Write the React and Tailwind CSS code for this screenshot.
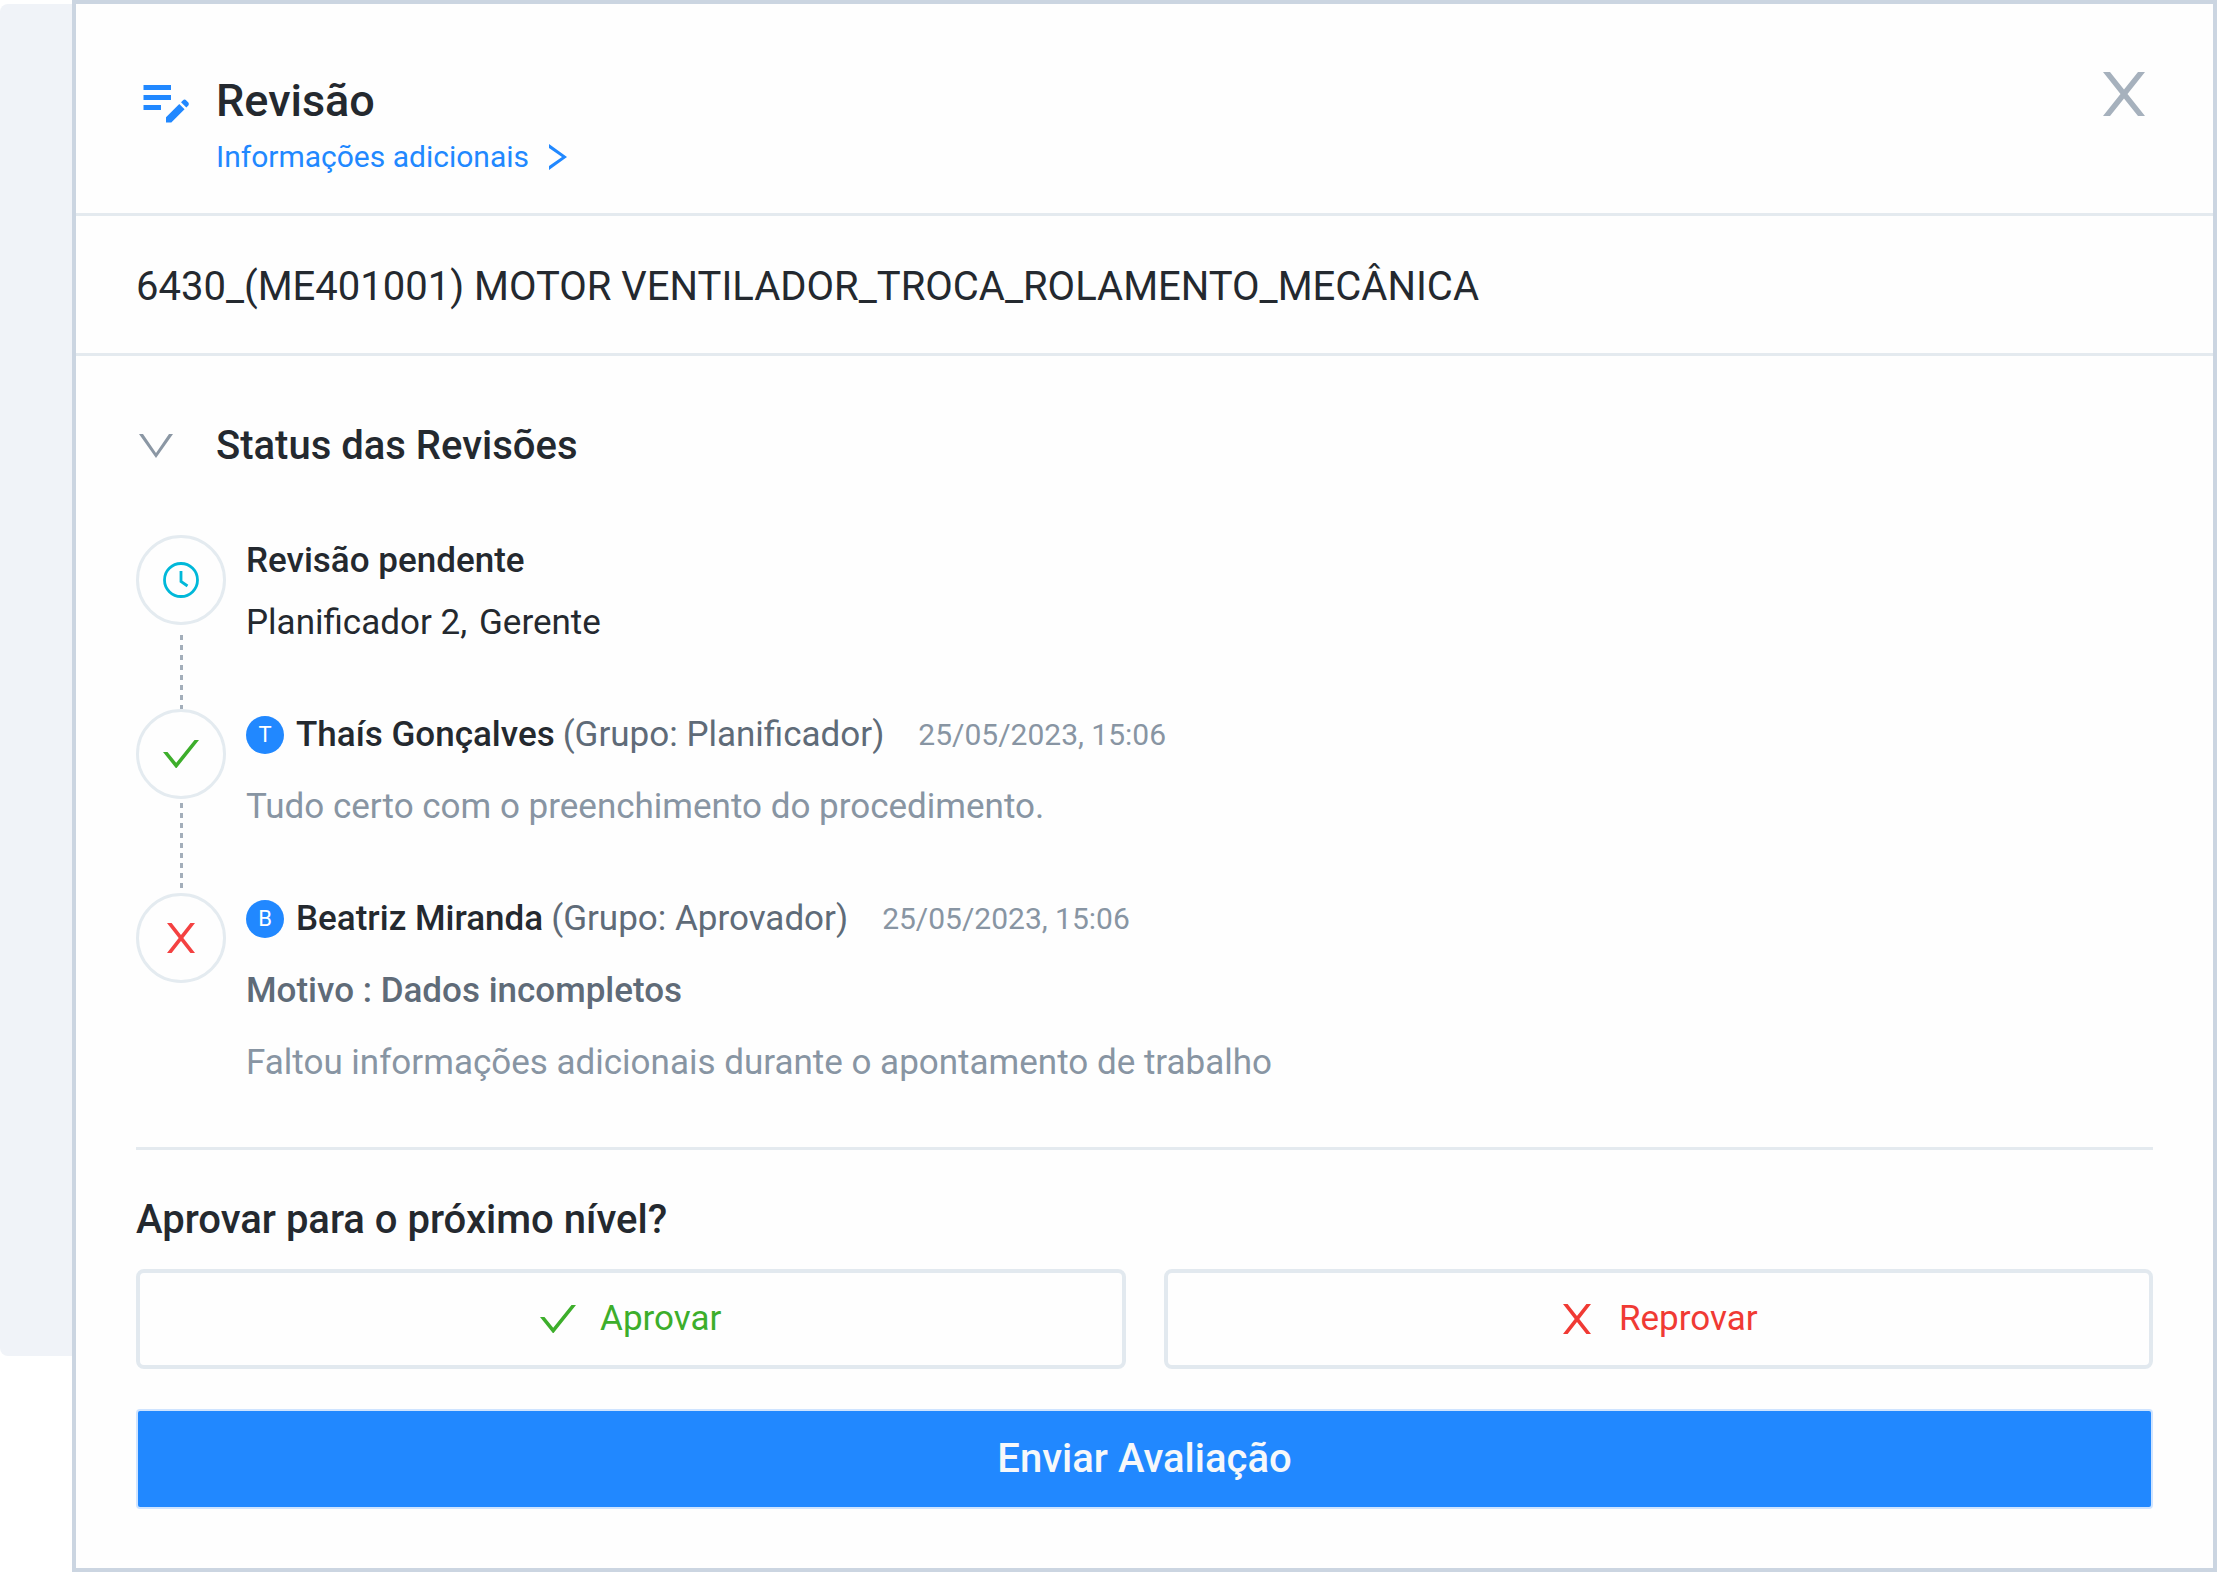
import React, { useState } from 'react';
import { MdEditNote } from 'react-icons/md';

const REVIEWS = [
  {
    id: 1, status: 'approved', initial: 'T', name: 'Thaís Gonçalves', group: '(Grupo: Planificador)',
    date: '25/05/2023, 15:06', comment: 'Tudo certo com o preenchimento do procedimento.',
  },
  {
    id: 2, status: 'rejected', initial: 'B', name: 'Beatriz Miranda', group: '(Grupo: Aprovador)',
    date: '25/05/2023, 15:06', reason: 'Motivo : Dados incompletos',
    comment: 'Faltou informações adicionais durante o apontamento de trabalho',
  },
];

/* Icons */
function CheckIcon({ className }) {
  return (
    <svg viewBox="0 0 36 28" fill="currentColor" className={className} aria-hidden="true">
      <path d="M0 12h4.500l8.700 10.700L31.500 0H36L13.200 28.500z" />
    </svg>
  );
}

function CrossIcon({ className }) {
  return (
    <svg viewBox="0 0 42 44" fill="currentColor" className={className} aria-hidden="true">
      <path d="M0 0h7l14 17.500L35 0h7L24.500 22 42 44h-7L21 26.500 7 44H0l17.500-22z" />
    </svg>
  );
}

function ThinCrossIcon({ className }) {
  return (
    <svg viewBox="0 0 28 30" fill="currentColor" className={className} aria-hidden="true">
      <path d="M0 0h4.600L14 12 23.400 0H28L16.300 15 28 30h-4.600L14 18 4.600 30H0l11.700-15z" />
    </svg>
  );
}

function ClockIcon({ className }) {
  return (
    <svg viewBox="0 0 36 36" fill="none" stroke="currentColor" strokeWidth="2.800" className={className} aria-hidden="true">
      <circle cx="18" cy="18" r="16.500" />
      <path d="M18 9v10.500l6.500 4.500" />
    </svg>
  );
}

function StepMark({ children }) {
  return (
    <div className="flex size-[90px] shrink-0 items-center justify-center rounded-full border-[3px] border-[#e4ebf0]">
      {children}
    </div>
  );
}

function Connector({ className }) {
  return (
    <div className={`w-[3px] flex-1 bg-[repeating-linear-gradient(to_bottom,#a3aeba_0_5px,transparent_5px_10px)] ${className}`} />
  );
}

function Review({ review, last }) {
  return (
    <li className="flex gap-5">
      <div className="flex flex-col items-center">
        <StepMark>
          {review.status === 'approved'
            ? <CheckIcon className="h-7 w-9 text-[#3dae2b]" />
            : <ThinCrossIcon className="h-[30px] w-9 text-[#f44141]" />}
        </StepMark>
        {!last && <Connector className="mt-1" />}
      </div>
      <div className={last ? 'pt-0.5' : 'pt-0.5 pb-[62px]'}>
        <div className="flex h-12 items-center">
          <span className="mr-3 flex size-[38px] items-center justify-center rounded-full bg-[#2188ff] text-[22px] text-white">{review.initial}</span>
          <span className="font-medium">{review.name}</span>
          <span className="ml-2 text-[#5f6b78]">{review.group}</span>
          <time className="ml-[34px] text-[30px] text-[#8895a3]">{review.date}</time>
        </div>
        {review.reason && <p className="mt-6 h-12 font-medium text-[#5f6b78]">{review.reason}</p>}
        <p className="mt-6 h-12 text-[#8895a3]">{review.comment}</p>
      </div>
    </li>
  );
}

export default function App() {
  const [open, setOpen] = useState(true);

  return (
    <div className="flex min-h-screen items-start bg-white pr-px font-[Roboto,sans-serif] text-[#24292f]">
      <div className="mt-1 h-[1352px] w-[72px] shrink-0 rounded-l-[8px] bg-[#f0f3f8]" />

      <main className="min-w-0 flex-1 border-4 border-[#cbd5e1] bg-[#fefefe]">
        {/* Header */}
        <header className="flex items-start border-b-[3px] border-[#e4eaef] px-[60px] pt-[66px] pb-[35px]">
          <MdEditNote className="size-[60px] shrink-0 text-[#2188ff]" />
          <div className="ml-5 flex-1">
            <h1 className="text-[45px] leading-[62px] font-medium">Revisão</h1>
            <a href="#info" className="mt-1 flex items-center gap-5 text-[30px] leading-[42px] text-[#2188ff]">
              Informações adicionais
              <svg viewBox="0 0 18 26" fill="currentColor" className="h-[26px] w-[18px]" aria-hidden="true">
                <path d="M0 0l18 13L0 26v-4L13 13 0 4z" />
              </svg>
            </a>
          </div>
          <button type="button" aria-label="Fechar" className="mt-0.5 mr-2">
            <CrossIcon className="h-11 w-[42px] text-[#a6b1bd]" />
          </button>
        </header>

        <h2 className="border-b-[3px] border-[#e4eaef] px-[60px] pt-[42px] pb-[38px] text-[40px] leading-[57px]">
          6430_(ME401001) MOTOR VENTILADOR_TROCA_ROLAMENTO_MECÂNICA
        </h2>

        <div className="px-[60px] pt-[60px] pb-[59px]">
          <button type="button" aria-expanded={open} onClick={() => setOpen(!open)} className="flex items-center text-[40px] leading-[60px] font-medium">
            <svg viewBox="0 0 34 24" fill="currentColor" className="mr-[43px] ml-[3px] h-6 w-[34px] text-[#8b97a4]" aria-hidden="true">
              <path d="M0 0h4l13 19L30 0h4L17 24z" />
            </svg>
            Status das Revisões
          </button>

          {open && (
            <ol className="mt-[59px] text-[35px] leading-[48px]">
              <li className="flex gap-5">
                <div className="flex flex-col items-center">
                  <StepMark><ClockIcon className="size-9 text-[#00b8d9]" /></StepMark>
                  <Connector className="mt-[10px]" />
                </div>
                <div className="pt-0.5 pb-[62px]">
                  <p className="font-medium">Revisão pendente</p>
                  <p className="mt-[14px] flex gap-3"><span>Planificador 2,</span><span>Gerente</span></p>
                </div>
              </li>
              {REVIEWS.map((r, i) => <Review key={r.id} review={r} last={i === REVIEWS.length - 1} />)}
            </ol>
          )}

          {/* Decision */}
          <section className="mt-[60px] border-t-[3px] border-[#e4eaef] pt-10">
            <h3 className="text-[40px] leading-[60px] font-medium">Aprovar para o próximo nível?</h3>
            <div className="mt-[19px] grid grid-cols-2 gap-[38px] text-[35px]">
              <button type="button" className="flex h-[100px] items-center justify-center gap-6 rounded-[8px] border-4 border-[#e2e9ef] text-[#3dae2b]">
                <CheckIcon className="h-7 w-9" />
                Aprovar
              </button>
              <button type="button" className="flex h-[100px] items-center justify-center gap-6 rounded-[8px] border-4 border-[#e2e9ef] text-[#f03a34]">
                <ThinCrossIcon className="h-[30px] w-9" />
                Reprovar
              </button>
            </div>
            <button type="button" className="mt-10 h-[100px] w-full rounded-[4px] border-2 border-[#cfe4ff] bg-[#2188ff] text-[40px] font-medium text-[#f6f8fa]">
              Enviar Avaliação
            </button>
          </section>
        </div>
      </main>
    </div>
  );
}
